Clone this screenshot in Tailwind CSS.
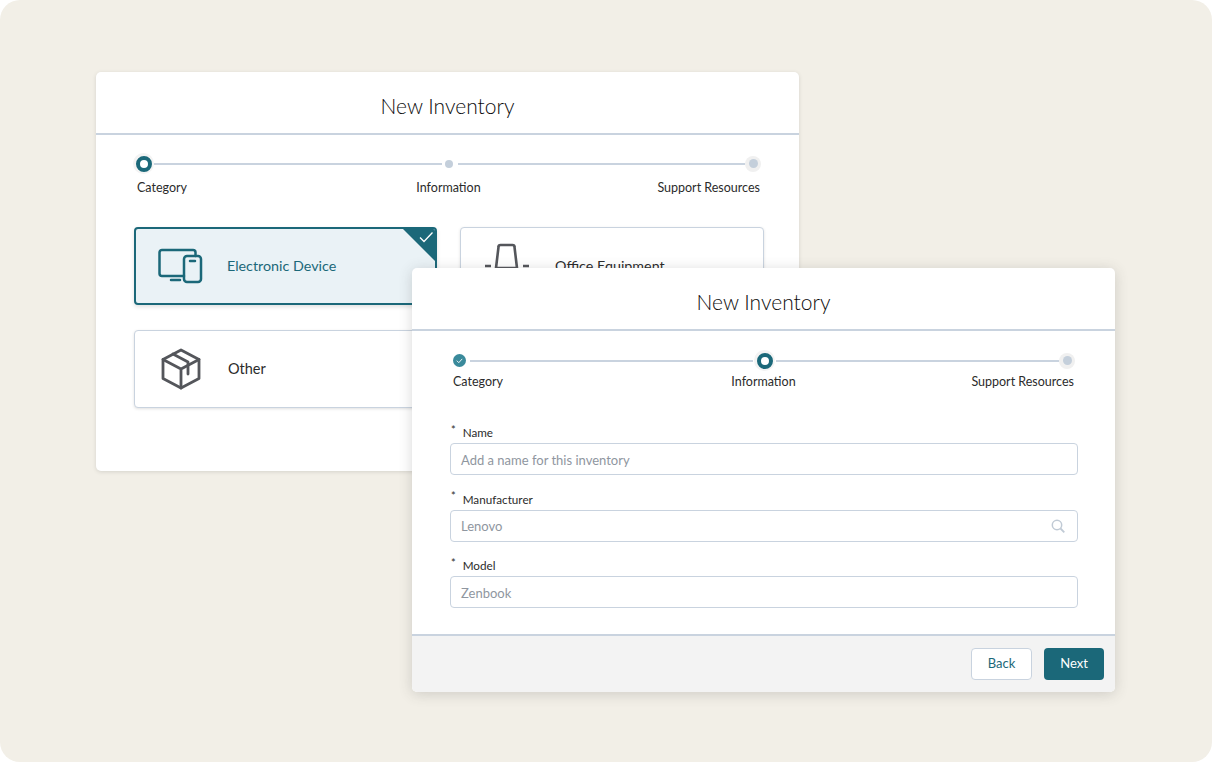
<!DOCTYPE html>
<html lang="en">
<head>
<meta charset="UTF-8">
<title>New Inventory</title>
<script src="https://cdn.jsdelivr.net/npm/@tailwindcss/browser@4"></script>
</head>
<body class="bg-white font-['Lato',sans-serif] text-[#2b2b2b]">

<div class="relative w-[1212px] h-[762px] overflow-hidden rounded-[20px] bg-[#f2efe7]">

  <!-- Back window: category step -->
  <div class="absolute left-[96px] top-[72px] w-[703px] h-[399px] rounded-[5px] bg-white shadow-[0_1px_4px_rgba(0,0,0,0.12)]">
    <div class="flex h-[63px] items-center justify-center border-b-2 border-[#c9d3df] pt-[6px] text-[21px] font-light text-[#0c0c0c]">New Inventory</div>

    <div class="flex items-center pl-[37px] pr-[38px] pt-[18px]">
      <span class="flex h-[21px] w-[21px] shrink-0 items-center justify-center rounded-full bg-[#f3f3f3]">
        <span class="h-[16px] w-[16px] rounded-full border-[4px] border-[#1b6879] bg-white"></span>
      </span>
      <span class="mr-[3px] h-[2px] flex-1 bg-[#c9d3df]"></span>
      <span class="mr-[5px] h-[8px] w-[8px] shrink-0 rounded-full bg-[#c4cfdb]"></span>
      <span class="h-[2px] flex-1 bg-[#c9d3df]"></span>
      <span class="flex h-[16px] w-[16px] shrink-0 items-center justify-center rounded-full bg-[#f0f0f0]">
        <span class="h-[9px] w-[9px] rounded-full bg-[#c4cfdb]"></span>
      </span>
    </div>
    <div class="mt-[4px] grid grid-cols-3 pl-[41px] pr-[39px] text-[12.500px] leading-[20px]">
      <span>Category</span>
      <span class="text-center">Information</span>
      <span class="text-right">Support Resources</span>
    </div>

    <div class="mt-[29px] grid grid-cols-[303px_304px] gap-x-[23px] gap-y-[25px] pl-[38px]">
      <!-- selected card -->
      <div class="relative flex h-[78px] items-center overflow-hidden rounded-[4px] border-2 border-[#1b6879] bg-[#eaf2f6] pl-[22px] shadow-[0_2px_4px_rgba(0,0,0,0.12)]">
        <svg class="h-[40px] w-[46px] shrink-0" viewBox="0 0 46 40" fill="none" stroke="#1b6879" stroke-width="2.500" stroke-linecap="round" stroke-linejoin="round">
          <path d="M26 30H4a2.500 2.500 0 0 1-2.500-2.500V6.500A2.500 2.500 0 0 1 4 4h31a2.500 2.500 0 0 1 2.500 2.500V10"/>
          <rect x="26" y="10" width="17" height="26" rx="3"/>
          <path d="M32 15h5M13 34h9"/>
        </svg>
        <span class="ml-[23px] text-[14.300px] text-[#1b6879]">Electronic Device</span>
        <svg class="absolute -right-[2px] -top-[2px] h-[36px] w-[36px]" viewBox="0 0 36 36">
          <path d="M0 0H36V36Z" fill="#1b6879"/>
          <path d="M19 10.500l4 4 8.500-9" fill="none" stroke="#fff" stroke-width="1.300"/>
        </svg>
      </div>

      <div class="flex h-[78px] items-center rounded-[4px] border border-[#c9d3df] bg-white pl-[22px] shadow-[0_1px_3px_rgba(0,0,0,0.12)]">
        <svg class="h-[46px] w-[46px] shrink-0" viewBox="0 0 46 46" fill="none" stroke="#54565b" stroke-width="2.600" stroke-linejoin="round">
          <path d="M13 25l2.500-21a2 2 0 0 1 2-2h12a2 2 0 0 1 2 2l2.500 21Z"/>
          <path d="M2 23h6M40 23h6M10 34h26"/>
        </svg>
        <span class="ml-[26px] text-[14.300px]">Office Equipment</span>
      </div>

      <div class="flex h-[78px] items-center rounded-[4px] border border-[#c9d3df] bg-white pl-[25px] shadow-[0_1px_3px_rgba(0,0,0,0.12)]">
        <svg class="h-[42px] w-[42px] shrink-0" viewBox="0 0 42 42" fill="none" stroke="#54565b" stroke-width="2.800" stroke-linejoin="round" stroke-linecap="round">
          <path d="M21 2l18 9.500v19L21 40 3 30.500v-19Z"/>
          <path d="M3 11.500l18 9.500 18-9.500M21 21v19"/>
          <path d="M13 6l15 8v12"/>
        </svg>
        <span class="ml-[26px] text-[14.500px]">Other</span>
      </div>
    </div>
  </div>

  <!-- Front window: information step -->
  <div class="absolute left-[412px] top-[268px] flex h-[424px] w-[703px] flex-col rounded-[5px] bg-white shadow-[0_2px_14px_rgba(60,60,60,0.2)]">
    <div class="flex h-[63px] shrink-0 items-center justify-center border-b-2 border-[#c9d3df] pt-[6px] text-[21px] font-light text-[#0c0c0c]">New Inventory</div>

    <div class="flex items-center pl-[41px] pr-[40px] pt-[19px]">
      <span class="flex h-[13px] w-[13px] shrink-0 items-center justify-center rounded-full bg-[#3a8a9b]">
        <svg class="h-[9px] w-[9px]" viewBox="0 0 10 10"><path d="M2 5.200l2.200 2.200L8 3.200" fill="none" stroke="#fff" stroke-width="1"/></svg>
      </span>
      <span class="ml-[4px] mr-[1px] h-[2px] flex-1 bg-[#c9d3df]"></span>
      <span class="flex h-[21px] w-[21px] shrink-0 items-center justify-center rounded-full bg-[#f3f3f3]">
        <span class="h-[16px] w-[16px] rounded-full border-[4px] border-[#1b6879] bg-white"></span>
      </span>
      <span class="ml-[1px] h-[2px] flex-1 bg-[#c9d3df]"></span>
      <span class="flex h-[16px] w-[16px] shrink-0 items-center justify-center rounded-full bg-[#f0f0f0]">
        <span class="h-[9px] w-[9px] rounded-full bg-[#c4cfdb]"></span>
      </span>
    </div>
    <div class="mt-[1px] grid grid-cols-3 pl-[41px] pr-[41px] text-[12.500px] leading-[20px]">
      <span>Category</span>
      <span class="text-center">Information</span>
      <span class="text-right">Support Resources</span>
    </div>

    <form class="mt-[29px] flex flex-col gap-[12.500px] pl-[38px] pr-[37px]">
      <div>
        <label class="flex h-[22px] items-center pl-[1px] pt-[2px] text-[11.700px]"><span class="mr-[7px] -mt-[6px] text-[11px]">*</span>Name</label>
        <div class="flex h-[32px] items-center rounded-[4px] border border-[#c9d3df] bg-white pl-[10px] pt-[3px] text-[13px] text-[#8f96a0]">Add a name for this inventory</div>
      </div>
      <div>
        <label class="flex h-[22px] items-center pl-[1px] pt-[2px] text-[11.700px]"><span class="mr-[7px] -mt-[6px] text-[11px]">*</span>Manufacturer</label>
        <div class="flex h-[32px] items-center justify-between rounded-[4px] border border-[#c9d3df] bg-white pl-[10px] pr-[12px] text-[13px] text-[#8f96a0]">
          <span class="pt-[3px]">Lenovo</span>
          <svg class="h-[14px] w-[14px]" viewBox="0 0 14 14" fill="none" stroke="#c0cad5" stroke-width="1.500"><circle cx="6" cy="6" r="4.700"/><path d="M9.500 9.500l3.800 3.800" stroke-width="1.800"/></svg>
        </div>
      </div>
      <div>
        <label class="flex h-[22px] items-center pl-[1px] pt-[2px] text-[11.700px]"><span class="mr-[7px] -mt-[6px] text-[11px]">*</span>Model</label>
        <div class="flex h-[32px] items-center rounded-[4px] border border-[#c9d3df] bg-white pl-[10px] pt-[3px] text-[13px] text-[#8f96a0]">Zenbook</div>
      </div>
    </form>

    <div class="mt-auto flex h-[58px] items-center justify-end gap-[12px] rounded-b-[5px] border-t-2 border-[#c9d3df] bg-[#f3f3f3] pr-[11px]">
      <button class="h-[32px] w-[61px] rounded-[4px] border border-[#c9d3df] bg-white text-[13px] text-[#1b6879]">Back</button>
      <button class="h-[32px] w-[60px] rounded-[4px] bg-[#1b6879] text-[13px] text-white">Next</button>
    </div>
  </div>
</div>
</body>
</html>
